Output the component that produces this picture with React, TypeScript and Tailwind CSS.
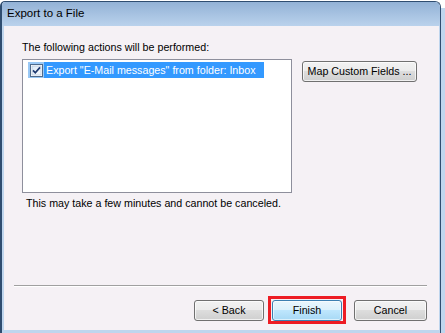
import React from "react";

const btnGray =
  "h-[21px] rounded-[3px] border border-[#707070] bg-[linear-gradient(to_bottom,#f2f2f2_0%,#ebebeb_50%,#dddddd_50%,#cfcfcf_100%)] shadow-[inset_0_0_0_1px_rgba(255,255,255,0.7)] text-[10.7px] leading-[19px] text-black flex items-center justify-center";

const btnBlue =
  "h-[21px] rounded-[3px] border border-[#3c7fb1] bg-[linear-gradient(to_bottom,#eaf6fd_0%,#d9f0fc_50%,#bee6fd_50%,#a7d9f5_100%)] shadow-[inset_0_0_0_1px_rgba(255,255,255,0.6)] text-[10.7px] leading-[19px] text-black flex items-center justify-center";

function CheckBox() {
  return (
    <svg width="13" height="13" viewBox="0 0 13 13" className="block">
      <defs>
        <linearGradient id="cbg" x1="0" y1="0" x2="1" y2="1">
          <stop offset="0" stopColor="#dce9f5" />
          <stop offset="1" stopColor="#f8fbfe" />
        </linearGradient>
      </defs>
      <rect x="0.5" y="0.5" width="12" height="12" fill="#ffffff" stroke="#4f6a8a" />
      <rect x="2" y="2" width="9" height="9" fill="url(#cbg)" stroke="#a7bcd6" strokeWidth="0.6" />
      <path d="M3 6.3 L5.3 8.8 L10 3.4" fill="none" stroke="#1f3a70" strokeWidth="1.7" />
    </svg>
  );
}

export default function App() {
  return (
    <div
      className="w-[445px] h-[333px] bg-white relative overflow-hidden"
      style={{ fontFamily: '"Liberation Sans", Arial, sans-serif' }}
    >
      <div className="flex h-full">
        <div className="w-[441px] h-[332px] mt-[1px] flex flex-col rounded-tl-[5px] rounded-tr-[6px] border-t border-l-2 border-r border-[#2f4d70] overflow-hidden">
          <div className="h-[24px] shrink-0 bg-gradient-to-b from-[#93b2d6] to-[#bad2ec] pl-[5px] flex items-center">
            <span className="text-[11.5px] text-black leading-none mt-[-1px]">Export to a File</span>
          </div>
          <div className="flex-1 flex flex-col bg-[#bfd6ee] pl-[2px] pr-[1px] pb-[3px]">
            <div className="flex-1 bg-[#f5f1f5] flex flex-col relative">
              <div className="pl-[18px] pt-[15px] flex flex-col">
                <div className="h-[13px] text-[10.7px] leading-[13px] text-black">
                  The following actions will be performed:
                </div>
                <div className="mt-[5px] flex items-start">
                  <div className="w-[270px] h-[134px] border border-[#8e8f9c] bg-white pl-[5px] pt-[2px]">
                    <div className="flex h-[16px] items-center">
                      <div className="w-[16px] h-[16px] bg-[#99c8f5] flex items-center justify-center">
                        <CheckBox />
                      </div>
                      <div className="h-[16px] bg-[#3399ff] text-white text-[10.7px] leading-[16px] pl-[2px] w-[220px]">
                        Export "E-Mail messages" from folder: Inbox
                      </div>
                    </div>
                  </div>
                  <div className={"ml-[10px] mt-[2px] w-[115px] " + btnGray}>Map Custom Fields ...</div>
                </div>
                <div className="mt-[4px] ml-[4px] h-[13px] text-[10.7px] leading-[13px] text-black">
                  This may take a few minutes and cannot be canceled.
                </div>
              </div>
              <div className="mt-[75px] ml-[10px] w-[413px] h-[1px] bg-[#a0a0a0]" />
              <div className="h-[1px] ml-[10px] w-[413px] bg-white" />
              <div className="mt-[13px] flex">
                <div className={"ml-[190px] w-[70px] " + btnGray}>&lt; Back</div>
                <div className={"ml-[8px] w-[70px] " + btnBlue}>Finish</div>
                <div className={"ml-[12px] w-[73px] " + btnGray}>Cancel</div>
              </div>
              <div className="absolute left-[264px] top-[270px] w-[78px] h-[28px] border-[3px] border-[#ed1c24]" />
            </div>
          </div>
        </div>
        <div className="w-[4px] mt-[8px] bg-[#bfd6ee]" />
      </div>
    </div>
  );
}
